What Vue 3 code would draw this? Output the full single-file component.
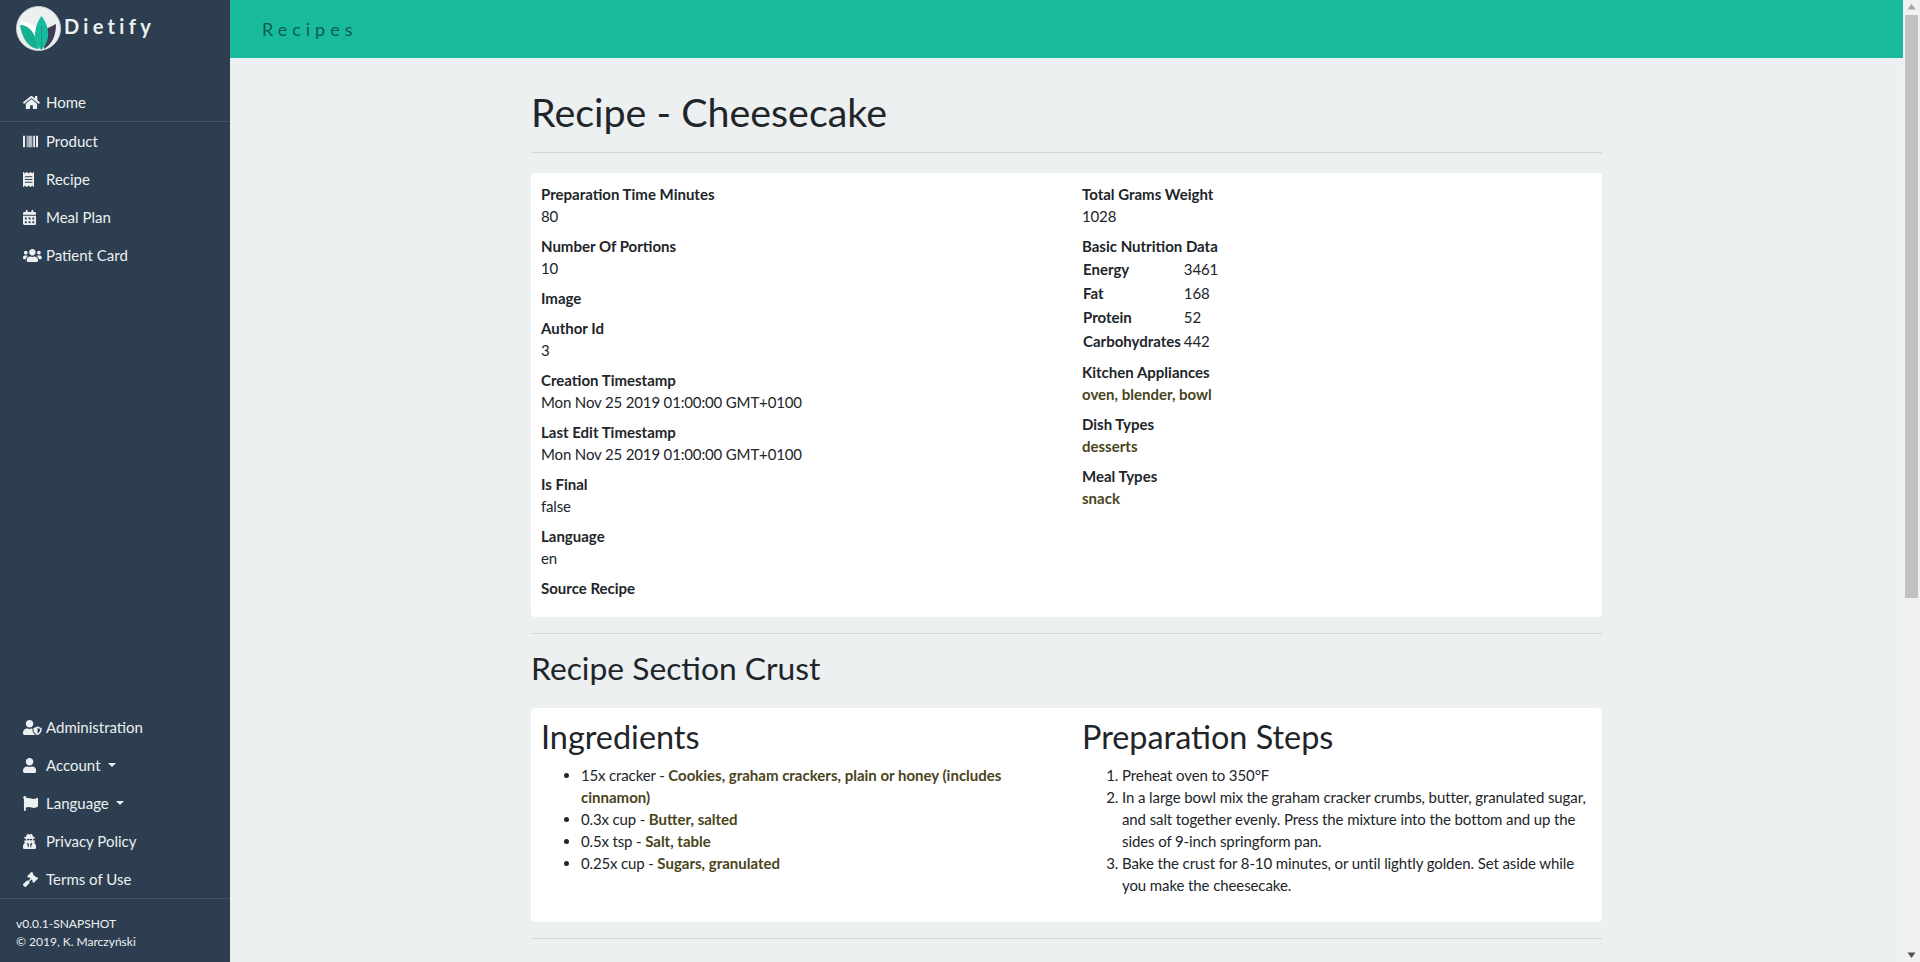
<script setup>
const icons = {
  home: ['0 0 576 512', 'M280.37 148.26L96 300.11V464a16 16 0 0 0 16 16l112.06-.29a16 16 0 0 0 15.92-16V368a16 16 0 0 1 16-16h64a16 16 0 0 1 16 16v95.64a16 16 0 0 0 16 16.05L464 480a16 16 0 0 0 16-16V300L295.67 148.26a12.19 12.19 0 0 0-15.3 0zM571.6 251.47L488 182.56V44.05a12 12 0 0 0-12-12h-56a12 12 0 0 0-12 12v72.61L318.47 43a48 48 0 0 0-61 0L4.34 251.47a12 12 0 0 0-1.6 16.9l25.5 31A12 12 0 0 0 45.15 301l235.22-193.74a12.19 12.19 0 0 1 15.3 0L530.9 301a12 12 0 0 0 16.9-1.6l25.5-31a12 12 0 0 0-1.7-16.93z'],
  barcode: ['0 0 512 512', 'M0 456V56h68v400H0zM126 456V56h24v400h-24zM165 456V56h25v400h-25zM205 456V56h25v400h-25zM245 456V56h25v400h-25zM285 456V56h31v400h-31zM350 456V56h60v400h-60zM444 456V56h68v400h-68z'],
  receipt: ['0 0 384 512', 'M358.4 3.2L320 48 265.6 3.2a15.9 15.9 0 0 0-19.2 0L192 48 137.6 3.2a15.9 15.9 0 0 0-19.2 0L64 48 25.6 3.2C15-4.7 0 2.8 0 16v480c0 13.2 15 20.7 25.6 12.8L64 464l54.4 44.8a15.9 15.9 0 0 0 19.2 0L192 464l54.4 44.8a15.9 15.9 0 0 0 19.2 0L320 464l38.4 44.8c10.5 7.9 25.6.4 25.6-12.8V16c0-13.2-15-20.7-25.6-12.8zM320 360c0 4.4-3.6 8-8 8H72c-4.4 0-8-3.6-8-8v-16c0-4.4 3.6-8 8-8h240c4.4 0 8 3.6 8 8v16zm0-96c0 4.4-3.6 8-8 8H72c-4.4 0-8-3.6-8-8v-16c0-4.4 3.6-8 8-8h240c4.4 0 8 3.6 8 8v16zm0-96c0 4.4-3.6 8-8 8H72c-4.4 0-8-3.6-8-8v-16c0-4.4 3.6-8 8-8h240c4.4 0 8 3.6 8 8v16z'],
  calendar: ['0 0 448 512', 'M0 464c0 26.5 21.5 48 48 48h352c26.5 0 48-21.5 48-48V192H0v272zm320-196c0-6.6 5.4-12 12-12h40c6.6 0 12 5.4 12 12v40c0 6.6-5.4 12-12 12h-40c-6.6 0-12-5.4-12-12v-40zm0 128c0-6.6 5.4-12 12-12h40c6.6 0 12 5.4 12 12v40c0 6.6-5.4 12-12 12h-40c-6.6 0-12-5.4-12-12v-40zM192 268c0-6.6 5.4-12 12-12h40c6.6 0 12 5.4 12 12v40c0 6.6-5.4 12-12 12h-40c-6.6 0-12-5.4-12-12v-40zm0 128c0-6.6 5.4-12 12-12h40c6.6 0 12 5.4 12 12v40c0 6.6-5.4 12-12 12h-40c-6.6 0-12-5.4-12-12v-40zM64 268c0-6.6 5.4-12 12-12h40c6.6 0 12 5.4 12 12v40c0 6.6-5.4 12-12 12H76c-6.6 0-12-5.4-12-12v-40zm0 128c0-6.6 5.4-12 12-12h40c6.6 0 12 5.4 12 12v40c0 6.6-5.4 12-12 12H76c-6.6 0-12-5.4-12-12v-40zM400 64h-48V16c0-8.8-7.2-16-16-16h-32c-8.8 0-16 7.2-16 16v48H160V16c0-8.8-7.2-16-16-16h-32c-8.8 0-16 7.2-16 16v48H48C21.5 64 0 85.5 0 112v48h448v-48c0-26.5-21.5-48-48-48z'],
  users: ['0 0 640 512', 'M96 224c35.3 0 64-28.7 64-64s-28.7-64-64-64-64 28.7-64 64 28.7 64 64 64zm448 0c35.3 0 64-28.7 64-64s-28.7-64-64-64-64 28.7-64 64 28.7 64 64 64zm32 32h-64c-17.6 0-33.5 7.1-45.1 18.6 40.3 22.1 68.9 62 75.1 109.4h66c17.7 0 32-14.3 32-32v-32c0-35.3-28.7-64-64-64zm-256 0c61.9 0 112-50.1 112-112S381.9 32 320 32 208 82.1 208 144s50.1 112 112 112zm76.8 32h-8.3c-20.8 10-43.9 16-68.5 16s-47.6-6-68.5-16h-8.3C179.6 288 128 339.6 128 403.2V432c0 26.5 21.5 48 48 48h288c26.5 0 48-21.5 48-48v-28.8c0-63.6-51.6-115.2-115.2-115.2zm-223.7-13.4C161.5 263.1 145.6 256 128 256H64c-35.3 0-64 28.7-64 64v32c0 17.7 14.3 32 32 32h65.9c6.3-47.4 34.9-87.3 75.2-109.4z'],
  shield: ['0 0 640 512', 'M622.3 271.1l-115.2-45c-4.1-1.6-12.6-3.7-22.2 0l-115.2 45c-10.7 4.2-17.7 14-17.7 24.9 0 111.6 68.7 188.8 132.9 213.9 9.6 3.7 18 1.6 22.2 0C558.4 489.9 640 420.5 640 296c0-10.9-7-20.7-17.7-24.9zM496 462.4V273.3l95.5 37.3c-5.6 87.1-60.9 135.4-95.5 151.8zM224 256c70.7 0 128-57.3 128-128S294.7 0 224 0 96 57.3 96 128s57.3 128 128 128zm96 40c0-2.5.8-4.7 1.1-7.2-2.5-.1-4.9-.8-7.5-.8h-16.7c-22.2 10.2-46.9 16-72.9 16s-50.6-5.8-72.9-16h-16.7C60.2 288 0 348.2 0 422.4V464c0 26.5 21.5 48 48 48h352c6.8 0 13.3-1.5 19.2-4-54-42.9-99.2-116.7-99.2-212z'],
  user: ['0 0 448 512', 'M224 256c70.7 0 128-57.3 128-128S294.7 0 224 0 96 57.3 96 128s57.3 128 128 128zm89.6 32h-16.7c-22.2 10.2-46.9 16-72.9 16s-50.6-5.8-72.9-16h-16.7C60.2 288 0 348.2 0 422.4V464c0 26.5 21.5 48 48 48h352c26.5 0 48-21.5 48-48v-41.6c0-74.2-60.2-134.4-134.4-134.4z'],
  flag: ['0 0 512 512', 'M349.565 98.783C295.978 98.783 251.721 64 184.348 64c-24.955 0-47.309 4.384-68.045 12.013a55.947 55.947 0 0 0 3.586-23.562C118.117 24.015 94.806 1.206 66.338.048 34.345-1.254 8 24.296 8 56c0 19.026 9.497 35.825 24 45.945V488c0 13.255 10.745 24 24 24h16c13.255 0 24-10.745 24-24v-94.4c28.311-12.064 63.582-22.122 114.435-22.122 53.588 0 97.844 34.783 165.217 34.783 48.169 0 86.667-16.294 122.505-40.858C506.84 359.452 512 349.571 512 339.045v-243.1c0-23.393-24.269-38.87-45.485-29.016-34.338 15.948-76.454 31.854-116.95 31.854z'],
  secret: ['0 0 448 512', 'M383.9 308.3l23.9-62.6c4-10.5-3.7-21.7-15-21.7h-58.5c11-18.9 17.8-40.6 17.8-64v-.3c39.2-7.8 64-19.1 64-31.7 0-13.3-27.3-25.1-70.1-33-9.2-32.8-27-65.8-40.6-82.8-9.5-11.9-25.9-15.6-39.5-8.8l-27.6 13.8c-9 4.5-19.6 4.5-28.6 0L182.1 3.4c-13.6-6.8-30-3.1-39.5 8.8-13.5 17-31.4 50-40.6 82.8-42.7 7.9-70 19.7-70 33 0 12.6 24.8 23.9 64 31.7v.3c0 23.4 6.8 45.1 17.8 64H56.3c-11.5 0-19.2 11.7-14.7 22.3l25.8 60.2C27.3 329.8 0 372.7 0 422.4v44.8C0 491.9 20.1 512 44.8 512h358.4c24.7 0 44.8-20.1 44.8-44.8v-44.8c0-48.4-25.8-90.4-64.1-114.1zM176 480l-41.6-192 49.6 32 24 40-32 120zm96 0l-32-120 24-40 49.6-32L272 480zm41.7-298.5c-3.9 11.9-7 24.6-16.5 33.4-10.1 9.3-48 22.4-64-25-2.8-8.4-15.4-8.4-18.3 0-17 50.2-56 32.4-64 25-9.5-8.8-12.7-21.5-16.5-33.4-.8-2.5-6.3-5.7-6.3-5.8v-10.8c28.3 3.6 61 5.8 96 5.8s67.7-2.1 96-5.8v10.8c-.1.1-5.6 3.2-6.4 5.8z'],
  gavel: ['0 0 512 512', 'M504.971 199.362l-22.627-22.627c-9.373-9.373-24.569-9.373-33.941 0l-5.657 5.657L329.608 69.255l5.657-5.657c9.373-9.373 9.373-24.569 0-33.941L312.638 7.029c-9.373-9.373-24.569-9.373-33.941 0L154.246 131.48c-9.373 9.373-9.373 24.569 0 33.941l22.627 22.627c9.373 9.373 24.569 9.373 33.941 0l5.657-5.657 39.598 39.598-81.04 81.04-5.657-5.657c-12.497-12.497-32.758-12.497-45.255 0L9.373 412.118c-12.497 12.497-12.497 32.758 0 45.255l45.255 45.255c12.497 12.497 32.758 12.497 45.255 0l114.745-114.745c12.497-12.497 12.497-32.758 0-45.255l-5.657-5.657 81.04-81.04 39.598 39.598-5.657 5.657c-9.373 9.373-9.373 24.569 0 33.941l22.627 22.627c9.373 9.373 24.569 9.373 33.941 0l124.451-124.451c9.372-9.372 9.372-24.568 0-33.941z']
}
const topNav = [
  { icon: 'barcode', label: 'Product' },
  { icon: 'receipt', label: 'Recipe' },
  { icon: 'calendar', label: 'Meal Plan' },
  { icon: 'users', label: 'Patient Card' }
]
const bottomNav = [
  { icon: 'shield', label: 'Administration' },
  { icon: 'user', label: 'Account', caret: true },
  { icon: 'flag', label: 'Language', caret: true },
  { icon: 'secret', label: 'Privacy Policy' },
  { icon: 'gavel', label: 'Terms of Use' }
]
const leftFields = [
  ['Preparation Time Minutes', '80'],
  ['Number Of Portions', '10'],
  ['Image', ''],
  ['Author Id', '3'],
  ['Creation Timestamp', 'Mon Nov 25 2019 01:00:00 GMT+0100'],
  ['Last Edit Timestamp', 'Mon Nov 25 2019 01:00:00 GMT+0100'],
  ['Is Final', 'false'],
  ['Language', 'en'],
  ['Source Recipe', '']
]
const nutrition = [['Energy', '3461'], ['Fat', '168'], ['Protein', '52'], ['Carbohydrates', '442']]
const linked = [
  ['Kitchen Appliances', 'oven, blender, bowl'],
  ['Dish Types', 'desserts'],
  ['Meal Types', 'snack']
]
const ingredients = [
  ['15x cracker - ', 'Cookies, graham crackers, plain or honey (includes cinnamon)'],
  ['0.3x cup - ', 'Butter, salted'],
  ['0.5x tsp - ', 'Salt, table'],
  ['0.25x cup - ', 'Sugars, granulated']
]
const steps = [
  'Preheat oven to 350°F',
  'In a large bowl mix the graham cracker crumbs, butter, granulated sugar, and salt together evenly. Press the mixture into the bottom and up the sides of 9-inch springform pan.',
  'Bake the crust for 8-10 minutes, or until lightly golden. Set aside while you make the cheesecake.'
]
</script>

<template>
  <div class="app">
    <aside class="sidebar">
      <div class="brand">
        <svg class="logo" viewBox="0 0 45 45" width="45" height="45">
          <circle cx="22.5" cy="22.5" r="22" fill="#ecf0f1" stroke="#c9ced1" stroke-width="1" />
          <path d="M30 23 L40 18 C40 30 36 38 28 43 Z" fill="#3f3d56" />
          <path d="M4 16 C10 15 17 18 21 24 L22 43 C12 42 5 32 4 16 Z" fill="#fff" />
          <path d="M4 19 C12 19 19 25 23 43 C13 43 6 33 4 19 Z" fill="#18b08f" />
          <path d="M25.5 10 C30 16 33 23 32 31 C31 37 28 41 25.5 44 C22 41 19 36 19 30 C19 23 21 16 25.5 10 Z" fill="#18bc9c" />
          <path d="M25.5 20 V43" stroke="#0f7f69" stroke-width=".6" />
        </svg>
        <span class="brand-name">Dietify</span>
      </div>
      <nav class="nav-home">
        <a class="nav-link">
          <span class="ico"><svg :viewBox="icons.home[0]"><path :d="icons.home[1]" /></svg></span>Home
        </a>
      </nav>
      <nav class="nav-top">
        <a v-for="n in topNav" :key="n.label" class="nav-link">
          <span class="ico"><svg :viewBox="icons[n.icon][0]"><path :d="icons[n.icon][1]" /></svg></span>{{ n.label }}
        </a>
      </nav>
      <nav class="nav-bottom">
        <a v-for="n in bottomNav" :key="n.label" class="nav-link">
          <span class="ico"><svg :viewBox="icons[n.icon][0]"><path :d="icons[n.icon][1]" /></svg></span>{{ n.label }}<i v-if="n.caret" class="caret"></i>
        </a>
      </nav>
      <footer class="side-foot">
        <div>v0.0.1-SNAPSHOT</div>
        <div>© 2019, K. Marczyński</div>
      </footer>
    </aside>

    <div class="main">
      <header class="topbar"><span class="topbar-title">Recipes</span></header>
      <div class="content">
        <h1 class="page-title">Recipe - Cheesecake</h1>
        <hr class="hr-first" />
        <section class="card">
          <div class="cols">
            <dl>
              <template v-for="f in leftFields" :key="f[0]">
                <dt>{{ f[0] }}</dt>
                <dd>{{ f[1] }}</dd>
              </template>
            </dl>
            <dl>
              <dt>Total Grams Weight</dt>
              <dd>1028</dd>
              <dt>Basic Nutrition Data</dt>
              <dd>
                <table>
                  <tbody>
                    <tr v-for="r in nutrition" :key="r[0]">
                      <th>{{ r[0] }}</th>
                      <td>{{ r[1] }}</td>
                    </tr>
                  </tbody>
                </table>
              </dd>
              <template v-for="f in linked" :key="f[0]">
                <dt>{{ f[0] }}</dt>
                <dd class="olive">{{ f[1] }}</dd>
              </template>
            </dl>
          </div>
        </section>
        <hr />
        <h2 class="section-title">Recipe Section Crust</h2>
        <section class="card">
          <div class="cols">
            <div>
              <h3>Ingredients</h3>
              <ul>
                <li v-for="i in ingredients" :key="i[0]">{{ i[0] }}<span class="olive">{{ i[1] }}</span></li>
              </ul>
            </div>
            <div>
              <h3>Preparation Steps</h3>
              <ol>
                <li v-for="s in steps" :key="s">{{ s }}</li>
              </ol>
            </div>
          </div>
        </section>
        <hr />
        <h2 class="section-title">Recipe Section Filling</h2>
      </div>
    </div>

    <div class="scrollbar">
      <svg class="arrow" viewBox="0 0 17 15" width="17" height="15"><path d="M8.5 4 L12.5 9.5 H4.5 Z" fill="#a3a3a3" /></svg>
      <div class="track"><div class="thumb"></div></div>
      <svg class="arrow" viewBox="0 0 17 15" width="17" height="15"><path d="M4.5 5.5 H12.5 L8.5 11 Z" fill="#505050" /></svg>
    </div>
  </div>
</template>

<style>
html, body { margin: 0; height: 100%; overflow: hidden; }
</style>

<style scoped>
* { box-sizing: border-box; }
.app {
  display: flex;
  height: 962px;
  overflow: hidden;
  font-family: Lato, "Liberation Sans", sans-serif;
  font-size: 15px;
  line-height: 22px;
  color: #212529;
  background: #ecf0f1;
}
.sidebar {
  width: 230px;
  flex: none;
  background: #2c3e50;
  color: #ecf0f1;
  display: flex;
  flex-direction: column;
}
.brand { display: flex; align-items: flex-start; padding: 6px 0 0 16px; height: 83px; }
.logo { flex: none; }
.brand-name {
  margin: 4px 0 0 3px;
  font-size: 20px;
  line-height: 32px;
  font-weight: 700;
  letter-spacing: 4.3px;
  color: #ecf0f1;
}
.nav-home { border-bottom: 1px solid #435363; }
.nav-link {
  display: flex;
  align-items: center;
  height: 38px;
  padding-left: 23px;
  color: #ecf0f1;
}
.ico { width: 23px; height: 15px; flex: none; display: block; }
.ico svg { display: block; height: 15px; fill: #ecf0f1; }
.nav-top { display: flex; flex-direction: column; }
.nav-bottom { margin-top: auto; }
.caret {
  display: inline-block;
  margin-left: 7px;
  border-top: 4.5px solid #ecf0f1;
  border-left: 4.5px solid transparent;
  border-right: 4.5px solid transparent;
}
.side-foot {
  border-top: 1px solid #435363;
  padding: 16px 16px 11px;
  font-size: 12px;
  line-height: 18px;
  color: #ecf0f1;
}
.main { flex: 1; min-width: 0; display: flex; flex-direction: column; }
.topbar {
  height: 58px;
  flex: none;
  background: #18bc9c;
  display: flex;
  align-items: center;
  padding-left: 32px;
}
.topbar-title {
  font-size: 18px;
  letter-spacing: 5px;
  color: #0c5c4f;
}
.content { width: 1071px; margin: 0 auto; padding-top: 30px; }
.page-title {
  margin: 0;
  font-size: 39.4px;
  line-height: 47px;
  font-weight: 400;
}
hr { border: 0; border-top: 1px solid rgba(0,0,0,.1); margin: 16px 0 15px; }
.hr-first { margin: 17px 0 20px; }
.section-title {
  margin: 0 0 20px;
  font-size: 31.8px;
  line-height: 39px;
  font-weight: 400;
}
.card { background: #fff; border-radius: 4px; padding: 10px; letter-spacing: -.15px; }
.cols { display: grid; grid-template-columns: 510px 510px; column-gap: 31px; }
dl { margin: 0; }
dt { font-weight: 700; letter-spacing: 0; }
dd { margin: 0 0 8px; }
table { border-collapse: collapse; }
th { text-align: left; font-weight: 700; padding: 1px 2px 1px 1px; letter-spacing: 0; }
td { padding: 1px; }
.olive { color: #4a4420; font-weight: 700; letter-spacing: 0; }
h3 {
  margin: 0 0 9px;
  font-size: 32.4px;
  line-height: 37px;
  font-weight: 400;
  letter-spacing: 0;
}
ul, ol { margin: 0 0 16px; padding-left: 40px; }
ol { letter-spacing: -.1px; }
.scrollbar {
  width: 17px;
  flex: none;
  background: #f1f1f1;
  display: flex;
  flex-direction: column;
}
.arrow { display: block; flex: none; }
.track { flex: 1; padding: 0 2px; }
.thumb { height: 583px; background: #c1c1c1; }
</style>
